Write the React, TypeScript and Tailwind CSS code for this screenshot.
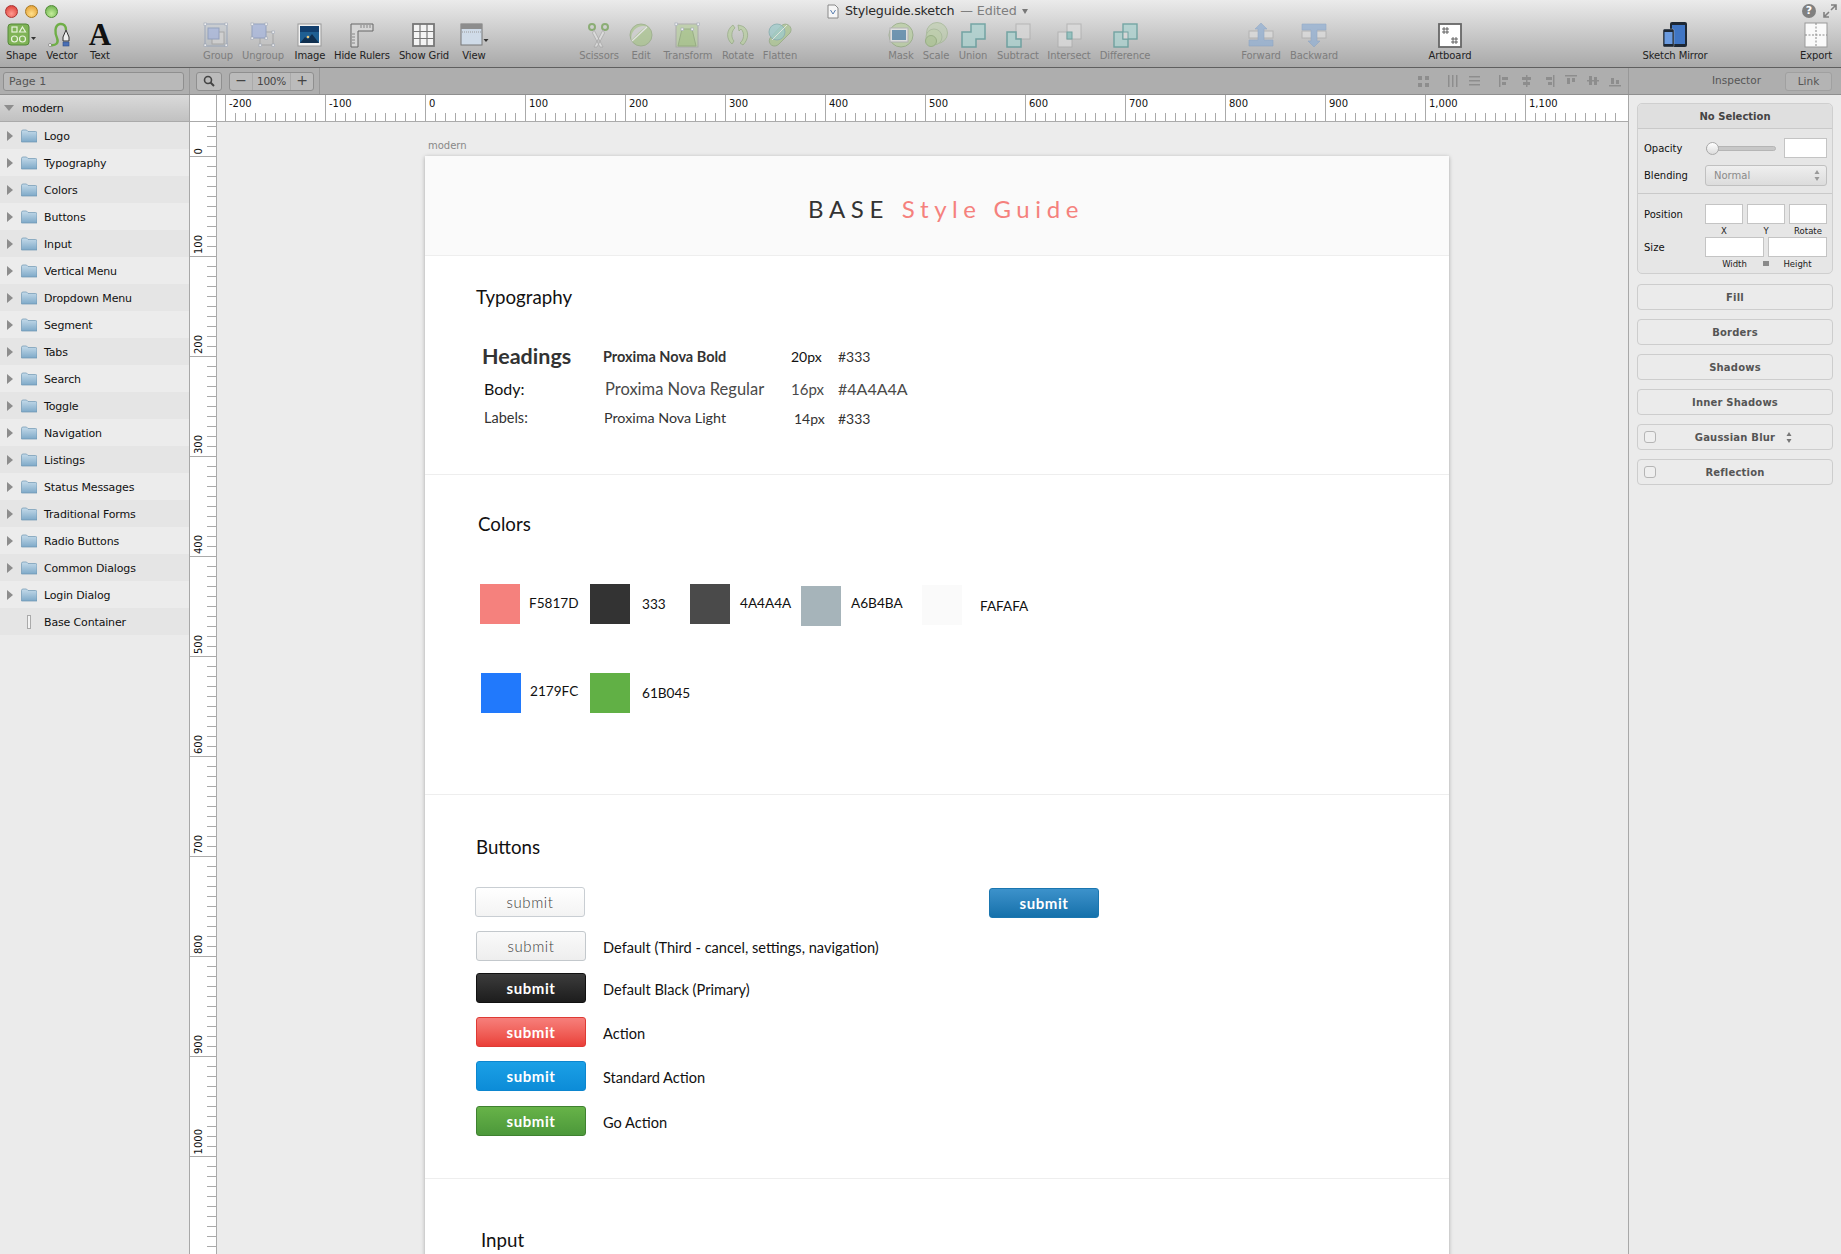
import type { ReactNode } from "react";

const ui = "font-['DejaVu_Sans',sans-serif]";

// Toolbar drawings, all in a 30x26 box.
const handle = (x: number, y: number) => <rect x={x} y={y} width="2.5" height="2.5" fill="#fff" stroke="#8a97ad" strokeWidth="0.6" />;

const icons: Record<string, ReactNode> = {
  shape: (
    <>
      <rect x="1" y="2" width="21" height="21" rx="3" fill="#7fb356" stroke="#55883a" />
      <rect x="5" y="5" width="5" height="5" fill="none" stroke="#e8f2dc" strokeWidth="1.2" />
      <path d="M15.5 5l3 5h-6z" fill="none" stroke="#e8f2dc" strokeWidth="1.2" />
      <circle cx="7.5" cy="17" r="3" fill="none" stroke="#e8f2dc" strokeWidth="1.2" />
      <circle cx="15.5" cy="17" r="3" fill="none" stroke="#e8f2dc" strokeWidth="1.2" />
      <path d="M24 15h5l-2.500 3z" fill="#333" />
    </>
  ),
  vector: (
    <>
      <path d="M3 23c6 1 9-2 7-7-2-4-3-13 3-14 4-.5 6 2 6 6" fill="none" stroke="#6fae47" strokeWidth="2.4" />
      <circle cx="3" cy="23" r="1.5" fill="#fff" stroke="#555" strokeWidth="0.5" />
      <path d="M19 8l3 7v4h-6v-4z" fill="#eee" stroke="#333" />
      <rect x="16" y="20" width="6" height="4" fill="#4a6fb5" stroke="#2f4d85" strokeWidth="0.6" />
    </>
  ),
  group: (
    <>
      <rect x="2" y="2" width="22" height="22" fill="#b7c2cf" fillOpacity="0.35" stroke="#8a9ab5" />
      <rect x="9" y="10" width="12" height="12" fill="#d3d3d3" stroke="#9a9a9a" />
      <rect x="5" y="6" width="11" height="11" fill="#a4b4dd" stroke="#7d8fb8" />
      {handle(1, 1)}{handle(22, 1)}{handle(1, 22)}{handle(22, 22)}
    </>
  ),
  ungroup: (
    <>
      <rect x="12" y="10" width="13" height="13" fill="#c9c9c9" fillOpacity="0.5" stroke="#999" />
      <rect x="4" y="2" width="14" height="14" fill="#a4b4dd" stroke="#7d8fb8" />
      {handle(3, 1)}{handle(17, 1)}{handle(3, 15)}{handle(17, 15)}{handle(24, 9)}{handle(11, 22)}{handle(24, 22)}
    </>
  ),
  image: (
    <>
      <rect x="3" y="2" width="23" height="22" fill="#f4f4f4" stroke="#999" />
      <rect x="5" y="4" width="19" height="17" fill="#1f5f92" />
      <rect x="5" y="4" width="19" height="6" fill="#123f6e" />
      <path d="M5 21l5-6 3 2 4-5 7 9z" fill="#0f2f4f" />
      <circle cx="13" cy="15" r="1.3" fill="#e8c77a" />
    </>
  ),
  rulers: (
    <>
      <path d="M4 2h22v7H11v16H4z" fill="#d6d6d6" stroke="#666" />
      <path d="M14 3v3M17 3v3M20 3v3M23 3v3M5 12h3M5 15h3M5 18h3M5 21h3" stroke="#666" strokeWidth="0.7" />
    </>
  ),
  grid: (
    <>
      <rect x="4" y="2" width="21" height="22" fill="#f4f4f4" stroke="#777" strokeWidth="1.8" />
      <path d="M11 2v22M18 2v22M4 9.500h21M4 16.500h21" stroke="#777" strokeWidth="1.2" />
    </>
  ),
  view: (
    <>
      <rect x="2" y="2" width="21" height="21" fill="#cfdbe8" stroke="#777" />
      <rect x="2" y="2" width="21" height="5" fill="#8d8d8d" />
      <path d="M3 10h19" stroke="#9a9a9a" strokeDasharray="1 1" />
      <path d="M24.500 17h5l-2.500 3z" fill="#333" />
    </>
  ),
  scissors: (
    <>
      <circle cx="8" cy="5" r="3" fill="none" stroke="#6f9f4f" strokeWidth="2" />
      <circle cx="21" cy="5" r="3" fill="none" stroke="#6f9f4f" strokeWidth="2" />
      <path d="M10 8l9 17-3 0-7.500-14zM19 8l-9 17 3 0 7.500-14z" fill="#e4e4e4" stroke="#999" strokeWidth="0.7" />
    </>
  ),
  edit: (
    <>
      <circle cx="15" cy="13" r="11" fill="#a9c58c" stroke="#91a97c" />
      <path d="M5.500 18C11 12 16 7 21 4.500C13 2 4 8 5.500 18z" fill="#d0d0d0" />
      <path d="M6 19L21 5" stroke="#eee" strokeWidth="1.2" />
    </>
  ),
  transform: (
    <>
      <rect x="3" y="2" width="22" height="23" fill="#b8cf9f" stroke="#a0a0a0" />
      <path d="M9 7h10l4 17H5z" fill="#a2c47f" stroke="#86a56b" />
      {handle(2, 1)}{handle(24, 1)}{handle(8, 6)}{handle(18, 6)}
    </>
  ),
  rotate: (
    <>
      <path d="M10 3C3 8 3 17 9 22l2-3c-3-3-3-10 1-13z" fill="#b8cf9f" stroke="#7f9c68" strokeWidth="0.7" />
      <path d="M19 4l-4-1 1 6 2-2c4 4 3 11-1 14l3 2c6-6 6-14 1-18z" fill="#b8cf9f" stroke="#7f9c68" strokeWidth="0.7" />
    </>
  ),
  flatten: (
    <>
      <path d="M5 16C2 22 9 27 14 22L25 11C29 5 21-1 16 4z" fill="#a9c58c" stroke="#8da679" />
      <circle cx="12" cy="10" r="8" fill="#8ecbc9" fillOpacity="0.8" stroke="#79a9ab" />
      <path d="M7 18L22 3" stroke="#e7eee0" />
    </>
  ),
  mask: (
    <>
      <circle cx="15" cy="13" r="12" fill="#b8cf9f" stroke="#8da679" />
      <rect x="4" y="6" width="18" height="14" fill="#e8e8e8" stroke="#aaa" />
      <rect x="6" y="8" width="14" height="10" fill="#4a7fa6" />
    </>
  ),
  scale: (
    <>
      <circle cx="16" cy="11" r="10.500" fill="#b8cf9f" fillOpacity="0.65" stroke="#a0b68f" />
      <circle cx="13" cy="15" r="8" fill="#b8cf9f" fillOpacity="0.8" stroke="#a0b68f" />
      <circle cx="10" cy="19" r="5.500" fill="#a9c58c" stroke="#86a56b" />
    </>
  ),
  union: <path d="M13 2h14v15H18v8H4V10h9z" fill="#a9d3d0" stroke="#4f9492" strokeWidth="1.5" />,
  subtract: (
    <>
      <rect x="13" y="2" width="14" height="15" fill="#d9d9d9" stroke="#aaa" />
      <path d="M4 10h9v7h5v8H4z" fill="#a9d3d0" stroke="#4f9492" strokeWidth="1.5" />
    </>
  ),
  intersect: (
    <>
      <rect x="4" y="10" width="14" height="15" fill="#ddd" stroke="#aaa" />
      <rect x="13" y="2" width="14" height="15" fill="#ddd" stroke="#aaa" />
      <rect x="13" y="10" width="5" height="7" fill="#83c0bd" stroke="#4f9492" />
    </>
  ),
  difference: (
    <>
      <rect x="4" y="10" width="14" height="15" fill="#a9d3d0" stroke="#4f9492" strokeWidth="1.4" />
      <rect x="13" y="2" width="14" height="15" fill="#a9d3d0" stroke="#4f9492" strokeWidth="1.4" />
      <rect x="13" y="10" width="5" height="7" fill="#ddd" stroke="#4f9492" />
    </>
  ),
  forward: (
    <>
      <rect x="3" y="9" width="10" height="7" fill="#ddd" stroke="#aaa" />
      <rect x="17" y="9" width="10" height="7" fill="#ddd" stroke="#aaa" />
      <path d="M15 1l6 6h-3v11h9v6H3v-6h9V7H9z" fill="#8faed3" stroke="#7d9cc2" strokeWidth="0.6" />
    </>
  ),
  backward: (
    <>
      <rect x="3" y="9" width="10" height="7" fill="#ddd" stroke="#aaa" />
      <rect x="17" y="9" width="10" height="7" fill="#ddd" stroke="#aaa" />
      <path d="M3 2h24v6h-9v11h3l-6 6-6-6h3V8H3z" fill="#8faed3" stroke="#7d9cc2" strokeWidth="0.6" />
    </>
  ),
  artboard: (
    <>
      <rect x="4" y="2" width="22" height="23" fill="#fff" stroke="#666" strokeWidth="1.8" />
      <path d="M9 5v7M12 5v7M7 7h7M7 10h7M18 15v7M21 15v7M16 17h7M16 20h7" stroke="#444" strokeWidth="0.8" />
    </>
  ),
  mirror: (
    <>
      <rect x="10" y="0" width="17" height="25" rx="2" fill="#1d2734" />
      <rect x="12" y="3" width="13" height="19" fill="#3f75c4" />
      <rect x="3" y="7" width="11" height="18" rx="1.500" fill="#1d2734" stroke="#ccc" strokeWidth="0.4" />
      <rect x="4.500" y="10" width="8" height="12" fill="#6b9be0" />
    </>
  ),
  export: (
    <>
      <rect x="4" y="1" width="22" height="24" fill="#fafafa" stroke="#999" />
      <path d="M15 1v24M4 13h22" stroke="#888" strokeDasharray="2 1.5" />
    </>
  ),
};

type Tool = { label: string; icon?: string; box: string; off?: boolean };

const tools: Tool[] = [
  { label: "Shape", icon: "shape", box: "w-[43px]" },
  { label: "Vector", icon: "vector", box: "w-[38px]" },
  { label: "Text", box: "w-[38px]" },
  { label: "Group", icon: "group", box: "w-[40px] ml-[79px]", off: true },
  { label: "Ungroup", icon: "ungroup", box: "w-[50px]", off: true },
  { label: "Image", icon: "image", box: "w-[44px]" },
  { label: "Hide Rulers", icon: "rulers", box: "w-[60px]" },
  { label: "Show Grid", icon: "grid", box: "w-[64px]" },
  { label: "View", icon: "view", box: "w-[36px]" },
  { label: "Scissors", icon: "scissors", box: "w-[44px] ml-[85px]", off: true },
  { label: "Edit", icon: "edit", box: "w-[40px]", off: true },
  { label: "Transform", icon: "transform", box: "w-[54px]", off: true },
  { label: "Rotate", icon: "rotate", box: "w-[46px]", off: true },
  { label: "Flatten", icon: "flatten", box: "w-[38px]", off: true },
  { label: "Mask", icon: "mask", box: "w-[34px] ml-[85px]", off: true },
  { label: "Scale", icon: "scale", box: "w-[36px]", off: true },
  { label: "Union", icon: "union", box: "w-[38px]", off: true },
  { label: "Subtract", icon: "subtract", box: "w-[52px]", off: true },
  { label: "Intersect", icon: "intersect", box: "w-[50px]", off: true },
  { label: "Difference", icon: "difference", box: "w-[62px]", off: true },
  { label: "Forward", icon: "forward", box: "w-[52px] ml-[79px]", off: true },
  { label: "Backward", icon: "backward", box: "w-[54px]", off: true },
  { label: "Artboard", icon: "artboard", box: "w-[50px] ml-[84px]" },
  { label: "Sketch Mirror", icon: "mirror", box: "w-[84px] ml-[158px]" },
  { label: "Export", icon: "export", box: "w-[50px] ml-[74px]" },
];

function ToolItem({ t }: { t: Tool }) {
  return (
    <div className={`${t.box} flex flex-col items-center shrink-0`}>
      <div className={`h-[26px] mb-px flex items-center justify-center ${t.off ? "opacity-70" : ""}`}>
        {t.icon ? (
          <svg viewBox="0 0 30 26" className="w-[30px] h-[26px]">{icons[t.icon]}</svg>
        ) : (
          <span className="font-['Liberation_Serif',serif] font-bold text-[31px] leading-[26px] text-[#111]">A</span>
        )}
      </div>
      <span className={`text-[10px] leading-[13px] whitespace-nowrap tracking-[-0.1px] ${t.off ? "text-[#7d7d7d]" : "text-[#222]"}`}>{t.label}</span>
    </div>
  );
}

function Toolbar() {
  return (
    <div className={`h-[68px] bg-gradient-to-b from-[#ebebeb] to-[#a9a9a9] border-b border-[#5f5f5f] shrink-0 ${ui}`}>
      <div className="h-[22px] flex items-center pl-[5px] pr-[4px]">
        <div className="flex gap-[7px]">
          <span className="w-[13px] h-[13px] rounded-full border border-[#a33] bg-[radial-gradient(circle_at_50%_70%,#ff9a90,#d8342c)]" />
          <span className="w-[13px] h-[13px] rounded-full border border-[#a97a20] bg-[radial-gradient(circle_at_50%_70%,#ffe08a,#e0962a)]" />
          <span className="w-[13px] h-[13px] rounded-full border border-[#4f8a35] bg-[radial-gradient(circle_at_50%_70%,#c4ee9a,#62a844)]" />
        </div>
        <svg viewBox="0 0 12 15" className="w-[12px] h-[15px] ml-[769px]">
          <path d="M1 1h7l3 3v10H1z" fill="#f6f6f6" stroke="#888" />
          <path d="M3.500 6l2.500 4 2.500-4" fill="none" stroke="#5a7fb0" />
        </svg>
        <span className="ml-[6px] text-[12.7px] text-[#2a2a2a] tracking-[-0.2px]">Styleguide.sketch</span>
        <span className="ml-[6px] text-[12.7px] text-[#7e7e7e] tracking-[-0.1px]">— Edited</span>
        <span className="ml-[5px] w-0 h-0 border-x-[3.5px] border-x-transparent border-t-[5px] border-t-[#777]" />
        <span className="ml-auto w-[14px] h-[14px] rounded-full bg-[#808080] text-white text-[11px] leading-[14px] font-bold text-center">?</span>
        <svg viewBox="0 0 14 14" className="w-[14px] h-[14px] ml-[7px]">
          <path d="M1 13l5-5M13 1L8 6M1 8v5h5M13 6V1H8" fill="none" stroke="#808080" strokeWidth="1.6" />
        </svg>
      </div>
      <div className="flex">
        {tools.map((t) => <ToolItem key={t.label} t={t} />)}
      </div>
    </div>
  );
}

const alignIcons = [
  { box: "ml-auto", d: "M0 1h4v4H0zM7 1h4v4H7zM0 8h4v4H0zM7 8h4v4H7z" },
  { box: "ml-[17px]", d: "M1 0h1.5v12H1zM5 0h1.5v12H5zM9 0h1.5v12H9z" },
  { box: "ml-[10px]", d: "M0 1h11v1.5H0zM0 5h11v1.5H0zM0 9h11v1.5H0z" },
  { box: "ml-[18px]", d: "M0 0h1.5v12H0zM3 2h6v3H3zM3 7h4v3H3z" },
  { box: "ml-[10px]", d: "M5 0h1.5v12H5zM1 2h9v3H1zM2 7h7v3H2z" },
  { box: "ml-[10px]", d: "M10 0h1.5v12H10zM3 2h6v3H3zM5 7h4v3H5z" },
  { box: "ml-[10px]", d: "M0 0h12v1.5H0zM2 3h3v6H2zM7 3h3v4H7z" },
  { box: "ml-[10px]", d: "M0 5h12v1.5H0zM2 1h3v9H2zM7 2h3v8H7z" },
  { box: "ml-[10px]", d: "M0 10h12v1.5H0zM2 3h3v6H2zM7 5h3v4H7z" },
];

function SecondBar() {
  return (
    <div className={`h-[27px] bg-[#aeaeae] border-b border-[#8f8f8f] flex items-center shrink-0 ${ui}`}>
      <div className="w-[190px] h-full border-r border-[#989898] flex items-center pl-[3px]">
        <div className="w-[181px] h-[19px] rounded-[3px] border border-[#8f8f8f] bg-[#b9b9b9] text-[11px] leading-[17px] pl-[5px] text-[#555]">Page 1</div>
      </div>
      <div className="w-[130px] h-full border-r border-[#989898] flex items-center pl-[6px]">
        <div className="w-[26px] h-[19px] rounded-[3px] border border-[#8f8f8f] bg-[#bbb] flex items-center justify-center">
          <svg viewBox="0 0 12 12" className="w-[12px] h-[12px]">
            <circle cx="5" cy="5" r="3.500" fill="none" stroke="#444" strokeWidth="1.6" />
            <path d="M7.500 7.500L11 11" stroke="#444" strokeWidth="2" />
          </svg>
        </div>
        <div className="ml-[7px] w-[85px] h-[19px] rounded-[3px] border border-[#8f8f8f] bg-[#bbb] flex text-[10.5px] leading-[17px] text-[#444]">
          <span className="w-[23px] text-center text-[14px] leading-[15px] border-r border-[#aaa]">−</span>
          <span className="flex-1 text-center tracking-[-0.3px]">100%</span>
          <span className="w-[23px] text-center text-[14px] leading-[15px] border-l border-[#aaa]">+</span>
        </div>
      </div>
      <div className="flex-1 flex items-center h-full pr-[7px]">
        {alignIcons.map((a) => (
          <svg key={a.d} viewBox="0 0 12 12" className={`w-[12px] h-[12px] ${a.box}`}>
            <path d={a.d} fill="#8d8d8d" />
          </svg>
        ))}
      </div>
      <div className="w-[213px] h-full border-l border-[#989898] flex items-center">
        <span className="ml-[83px] text-[10.5px] text-[#555]">Inspector</span>
        <span className="ml-[24px] w-[47px] h-[19px] rounded-[3px] border border-[#a0a0a0] bg-[#b4b4b4] text-center text-[10.5px] leading-[17px] text-[#555]">Link</span>
      </div>
    </div>
  );
}

const layers = [
  "Logo", "Typography", "Colors", "Buttons", "Input", "Vertical Menu", "Dropdown Menu", "Segment", "Tabs", "Search",
  "Toggle", "Navigation", "Listings", "Status Messages", "Traditional Forms", "Radio Buttons", "Common Dialogs", "Login Dialog",
];

function Folder() {
  return (
    <svg viewBox="0 0 16 14" className="w-[16px] h-[14px] ml-[8px]">
      <defs>
        <linearGradient id="folderFill" x1="0" y1="0" x2="0" y2="1">
          <stop offset="0" stopColor="#c5dbea" />
          <stop offset="1" stopColor="#7ea9c8" />
        </linearGradient>
      </defs>
      <path d="M.5 2.500Q.5 1 2 1h3.500l1.500 1.500h7.500q1.500 0 1.500 1.500v9H.5z" fill="url(#folderFill)" stroke="#6f96b3" strokeWidth="0.7" />
    </svg>
  );
}

const layerText = "text-[11px] text-[#111] whitespace-nowrap tracking-[-0.15px] pt-[3px]";

function Sidebar() {
  return (
    <div className={`w-[190px] shrink-0 bg-[#ebebeb] border-r border-[#a8a8a8] ${ui}`}>
      <div className="h-[27px] bg-gradient-to-b from-[#dadada] to-[#c1c1c1] border-b border-[#aaa] flex items-center pl-[4px]">
        <span className="w-0 h-0 border-x-[5px] border-x-transparent border-t-[6px] border-t-[#8d8d8d]" />
        <span className={`ml-[8px] ${layerText}`}>modern</span>
      </div>
      {layers.map((name, i) => (
        <div key={name} className={`h-[27px] flex items-center pl-[7px] ${i % 2 === 0 ? "bg-[#e5e5e5]" : "bg-[#ececec]"}`}>
          <span className="w-0 h-0 border-y-[5px] border-y-transparent border-l-[6px] border-l-[#8d8d8d]" />
          <Folder />
          <span className={`ml-[7px] ${layerText}`}>{name}</span>
        </div>
      ))}
      <div className="h-[27px] flex items-center pl-[27px] bg-[#e5e5e5]">
        <span className="w-[4px] h-[14px] bg-[#f4f4f4] border border-[#aaa]" />
        <span className={`ml-[13px] ${layerText}`}>Base Container</span>
      </div>
    </div>
  );
}

const hMarks = [-200, -100, 0, 100, 200, 300, 400, 500, 600, 700, 800, 900, 1000, 1100];

function HRuler() {
  return (
    <div className={`h-[27px] bg-white border-b border-[#aaa] flex shrink-0 ${ui}`}>
      <div className="w-[27px] shrink-0 border-r border-[#aaa]" />
      <div className="w-[8px] shrink-0" />
      {hMarks.map((m) => (
        <div key={m} className="w-[100px] shrink-0 border-l border-[#aaa] flex flex-col justify-between">
          <span className="text-[10px] leading-[18px] pl-[3px] text-[#111]">{m.toLocaleString("en-US")}</span>
          <div className="h-[8px] bg-[repeating-linear-gradient(to_right,transparent_0,transparent_9px,#aaa_9px,#aaa_10px)]" />
        </div>
      ))}
    </div>
  );
}

const vMarks = [100, 200, 300, 400, 500, 600, 700, 800, 900, 1000];

function VCell({ label, h }: { label?: string; h: string }) {
  return (
    <div className={`${h} shrink-0 border-b border-[#aaa] flex justify-between`}>
      <span className="[writing-mode:vertical-rl] rotate-180 self-end text-[10px] leading-[17px] pt-[2px] text-[#111]">{label}</span>
      <div className="w-[9px] bg-[repeating-linear-gradient(to_top,transparent_0,transparent_9px,#aaa_9px,#aaa_10px)]" />
    </div>
  );
}

function VRuler() {
  return (
    <div className={`w-[27px] shrink-0 bg-white border-r border-[#aaa] flex flex-col overflow-hidden ${ui}`}>
      <VCell label="0" h="h-[35px]" />
      {vMarks.map((m) => <VCell key={m} label={m.toLocaleString("en-US").replace(",", "")} h="h-[100px]" />)}
      <VCell h="h-[100px]" />
    </div>
  );
}

type Swatch = { hex: string; label: string; box: string; sw: string; gap: string; nudge: string };

const row1: Swatch[] = [
  { hex: "bg-[#f5817d]", label: "F5817D", box: "w-[110px]", sw: "", gap: "ml-[9px]", nudge: "pb-[2px]" },
  { hex: "bg-[#333333]", label: "333", box: "w-[100px]", sw: "", gap: "ml-[12px]", nudge: "" },
  { hex: "bg-[#4a4a4a]", label: "4A4A4A", box: "w-[111px]", sw: "", gap: "ml-[10px]", nudge: "pb-[2px]" },
  { hex: "bg-[#a6b4ba]", label: "A6B4BA", box: "w-[121px]", sw: "mt-[2px]", gap: "ml-[10px]", nudge: "pb-[6px]" },
  { hex: "bg-[#fafafa]", label: "FAFAFA", box: "w-[100px]", sw: "mt-[1px]", gap: "ml-[18px]", nudge: "pt-[2px]" },
];

const row2: Swatch[] = [
  { hex: "bg-[#2179fc]", label: "2179FC", box: "w-[109px]", sw: "", gap: "ml-[9px]", nudge: "pb-[4px]" },
  { hex: "bg-[#61b045]", label: "61B045", box: "w-[100px]", sw: "", gap: "ml-[12px]", nudge: "" },
];

function SwatchItem({ s }: { s: Swatch }) {
  return (
    <div className={`${s.box} ${s.sw} flex items-center h-[40px]`}>
      <div className={`w-[40px] h-[40px] shrink-0 ${s.hex}`} />
      <span className={`${s.gap} ${s.nudge} text-[13.6px] text-[#111]`}>{s.label}</span>
    </div>
  );
}

const looks = {
  light: "bg-gradient-to-b from-white to-[#f3f3f3] border-[#c9ced3] text-[#3c3c3c] font-light",
  flat: "bg-gradient-to-b from-[#fafafa] to-[#eeeeee] border-[#c3c8cc] text-[#3c3c3c] font-light",
  black: "bg-gradient-to-b from-[#3c3c3c] to-[#1d1d1d] border-[#111] text-white font-bold",
  red: "bg-gradient-to-b from-[#f67f7b] to-[#ea3e38] border-[#de3a34] text-white font-bold",
  blue: "bg-gradient-to-b from-[#1ba0e6] to-[#0c8cd8] border-[#0c86cf] text-white font-bold",
  green: "bg-gradient-to-b from-[#67b348] to-[#4c983a] border-[#3f8130] text-white font-bold",
  steel: "bg-gradient-to-b from-[#3c92cb] to-[#1471ab] border-[#1a76b0] text-white font-bold",
};

function SubmitButton({ look, box = "" }: { look: string; box?: string }) {
  return (
    <div className={`w-[110px] h-[30px] shrink-0 rounded-[3px] border flex items-center justify-center text-[15px] tracking-[0.6px] ${look} ${box}`}>
      submit
    </div>
  );
}

const buttonRows: { look: string; note: string; gap: string }[] = [
  { look: looks.flat, note: "Default (Third - cancel, settings, navigation)", gap: "mt-[13px]" },
  { look: looks.black, note: "Default Black (Primary)", gap: "mt-[12px]" },
  { look: looks.red, note: "Action", gap: "mt-[14px]" },
  { look: looks.blue, note: "Standard Action", gap: "mt-[14px]" },
  { look: looks.green, note: "Go Action", gap: "mt-[15px]" },
];

const heading = "text-[18.7px] leading-[21px] pb-px text-[#111]";

function Artboard() {
  return (
    <div className="w-[1024px] bg-white shadow-[0_1px_4px_rgba(0,0,0,0.3)] font-['Lato',sans-serif]">
      <div className="h-[100px] bg-[#fafafa] border-b border-[#eeeeee] flex items-center justify-center pl-[18px] pt-[7px]">
        <span className="text-[24px] tracking-[5.6px] text-[#333]">BASE</span>
        <span className="ml-[13px] text-[24px] tracking-[5.6px] text-[#f5817d]">Style Guide</span>
      </div>

      <section className="h-[219px] border-b border-[#eeeeee] pt-[31px]">
        <h2 className={`${heading} pl-[51px]`}>Typography</h2>
        <div className="mt-[32px] h-[31px] flex items-center pl-[57px] text-[#333]">
          <span className="w-[121px] text-[21.5px] font-bold">Headings</span>
          <span className="w-[188px] text-[14.5px] font-bold">Proxima Nova Bold</span>
          <span className="w-[47px] text-[14px] text-[#111]">20px</span>
          <span className="text-[14px]">#333</span>
        </div>
        <div className="h-[34px] flex items-center pl-[59px] text-[#4a4a4a]">
          <span className="w-[121px] text-[16px] text-[#111]">Body:</span>
          <span className="w-[186px] text-[16.5px]">Proxima Nova Regular</span>
          <span className="w-[47px] text-[15px]">16px</span>
          <span className="text-[16px]">#4A4A4A</span>
        </div>
        <div className="h-[24px] flex items-center pl-[59px] text-[#333]">
          <span className="w-[120px] text-[14.5px]">Labels:</span>
          <span className="w-[190px] text-[14.3px]">Proxima Nova Light</span>
          <span className="w-[44px] text-[14px]">14px</span>
          <span className="text-[14px]">#333</span>
        </div>
      </section>

      <section className="h-[320px] border-b border-[#eeeeee] pt-[39px]">
        <h2 className={`${heading} pl-[53px]`}>Colors</h2>
        <div className="mt-[48px] h-[42px] flex items-start pl-[55px]">
          {row1.map((s) => <SwatchItem key={s.label} s={s} />)}
        </div>
        <div className="mt-[47px] flex pl-[56px]">
          {row2.map((s) => <SwatchItem key={s.label} s={s} />)}
        </div>
      </section>

      <section className="h-[384px] border-b border-[#eeeeee] pt-[42px]">
        <h2 className={`${heading} pl-[51px]`}>Buttons</h2>
        <div className="mt-[28px] flex items-start pl-[50px]">
          <SubmitButton look={looks.light} />
          <SubmitButton look={looks.steel} box="ml-[404px] mt-[1px]" />
        </div>
        {buttonRows.map((r) => (
          <div key={r.note} className={`${r.gap} flex items-center pl-[51px]`}>
            <SubmitButton look={r.look} />
            <span className="ml-[17px] pt-[4px] text-[14.6px] text-[#111]">{r.note}</span>
          </div>
        ))}
      </section>

      <section className="h-[200px] pt-[51px]">
        <h2 className={`${heading} pl-[56px]`}>Input</h2>
      </section>
    </div>
  );
}

function Canvas() {
  return (
    <div className="flex-1 min-w-0 bg-[#ececec] overflow-hidden pl-[208px]">
      <div className={`h-[34px] flex items-end pl-[3px] pb-[3px] text-[10px] leading-[14px] text-[#888] ${ui}`}>modern</div>
      <Artboard />
    </div>
  );
}

const fieldBox = "h-[20px] bg-white border border-[#c4c4c4] shrink-0";
const fieldText = "text-[8.5px] leading-[12px] text-center text-[#222]";

function PanelButton({ label, check, arrows }: { label: string; check?: boolean; arrows?: boolean }) {
  return (
    <div className="h-[26px] rounded-[4px] border border-[#cdcdcd] bg-[#ebebeb] flex items-center justify-center relative text-[10px] font-bold text-[#555] tracking-[0.2px]">
      {check && <span className="absolute left-[6px] w-[12px] h-[12px] rounded-[3px] border border-[#b5b5b5] bg-[#efefef]" />}
      {label}
      {arrows && (
        <svg viewBox="0 0 6 11" className="absolute left-[148px] w-[6px] h-[11px]">
          <path d="M3 0l2.500 4h-5zM3 11l2.500-4h-5z" fill="#777" />
        </svg>
      )}
    </div>
  );
}

function Inspector() {
  return (
    <div className={`w-[213px] shrink-0 bg-[#ebebeb] border-l border-[#a8a8a8] pl-[8px] pr-[8px] ${ui}`}>
      <div className="h-[27px]" />
      <div className="-mt-[19px] rounded-[5px] border border-[#cfcfcf] bg-[#e6e6e6]">
        <div className="h-[25px] bg-[#dfdfdf] rounded-t-[5px] border-b border-[#c9c9c9] flex items-center justify-center text-[10px] font-bold text-[#444]">No Selection</div>
        <div className="h-[65px] border-b border-[#c9c9c9] pl-[6px] pt-[9px] text-[10px] text-[#111]">
          <div className="h-[20px] flex items-center">
            <span className="w-[61px]">Opacity</span>
            <div className="w-[70px] h-[5px] ml-px rounded-full bg-[#c7c7c7] border border-[#b5b5b5] relative">
              <span className="absolute -left-[1px] -top-[5px] w-[13px] h-[13px] rounded-full border border-[#aaa] bg-gradient-to-b from-white to-[#dcdcdc]" />
            </div>
            <div className={`${fieldBox} w-[43px] ml-[8px]`} />
          </div>
          <div className="mt-[7px] h-[21px] flex items-center">
            <span className="w-[61px]">Blending</span>
            <div className="w-[122px] h-[21px] rounded-[3px] border border-[#c0c0c0] bg-gradient-to-b from-[#efefef] to-[#dcdcdc] flex items-center justify-between pl-[8px] pr-[6px] text-[#8a8a8a]">
              Normal
              <svg viewBox="0 0 6 11" className="w-[6px] h-[11px]">
                <path d="M3 0l2.500 4h-5zM3 11l2.500-4h-5z" fill="#999" />
              </svg>
            </div>
          </div>
        </div>
        <div className="h-[79px] pl-[6px] pt-[10px] text-[10px] text-[#111]">
          <div className="flex items-start">
            <span className="w-[61px] leading-[22px]">Position</span>
            <div>
              <div className="flex gap-[4px]">
                <div className={`${fieldBox} w-[38px]`} />
                <div className={`${fieldBox} w-[38px]`} />
                <div className={`${fieldBox} w-[38px]`} />
              </div>
              <div className="flex gap-[4px] mt-px">
                <span className={`w-[38px] ${fieldText}`}>X</span>
                <span className={`w-[38px] ${fieldText}`}>Y</span>
                <span className={`w-[38px] ${fieldText}`}>Rotate</span>
              </div>
            </div>
          </div>
          <div className="flex items-start">
            <span className="w-[61px] leading-[22px]">Size</span>
            <div>
              <div className="flex gap-[4px]">
                <div className={`${fieldBox} w-[59px]`} />
                <div className={`${fieldBox} w-[59px]`} />
              </div>
              <div className="flex gap-[4px] mt-px relative">
                <span className={`w-[59px] ${fieldText}`}>Width</span>
                <span className={`w-[59px] ${fieldText}`}>Height</span>
                <span className="absolute left-[58px] top-[3px] w-[6px] h-[5px] bg-[#8a8a8a]" />
              </div>
            </div>
          </div>
        </div>
      </div>
      <div className="mt-[10px] flex flex-col gap-[9px]">
        <PanelButton label="Fill" />
        <PanelButton label="Borders" />
        <PanelButton label="Shadows" />
        <PanelButton label="Inner Shadows" />
        <PanelButton label="Gaussian Blur" check arrows />
        <PanelButton label="Reflection" check />
      </div>
    </div>
  );
}

export default function App() {
  return (
    <div className="w-[1841px] h-[1254px] flex flex-col overflow-hidden bg-[#ececec]">
      <Toolbar />
      <SecondBar />
      <div className="flex flex-1 min-h-0">
        <Sidebar />
        <div className="flex-1 min-w-0 flex flex-col">
          <HRuler />
          <div className="flex flex-1 min-h-0">
            <VRuler />
            <Canvas />
          </div>
        </div>
        <Inspector />
      </div>
    </div>
  );
}
